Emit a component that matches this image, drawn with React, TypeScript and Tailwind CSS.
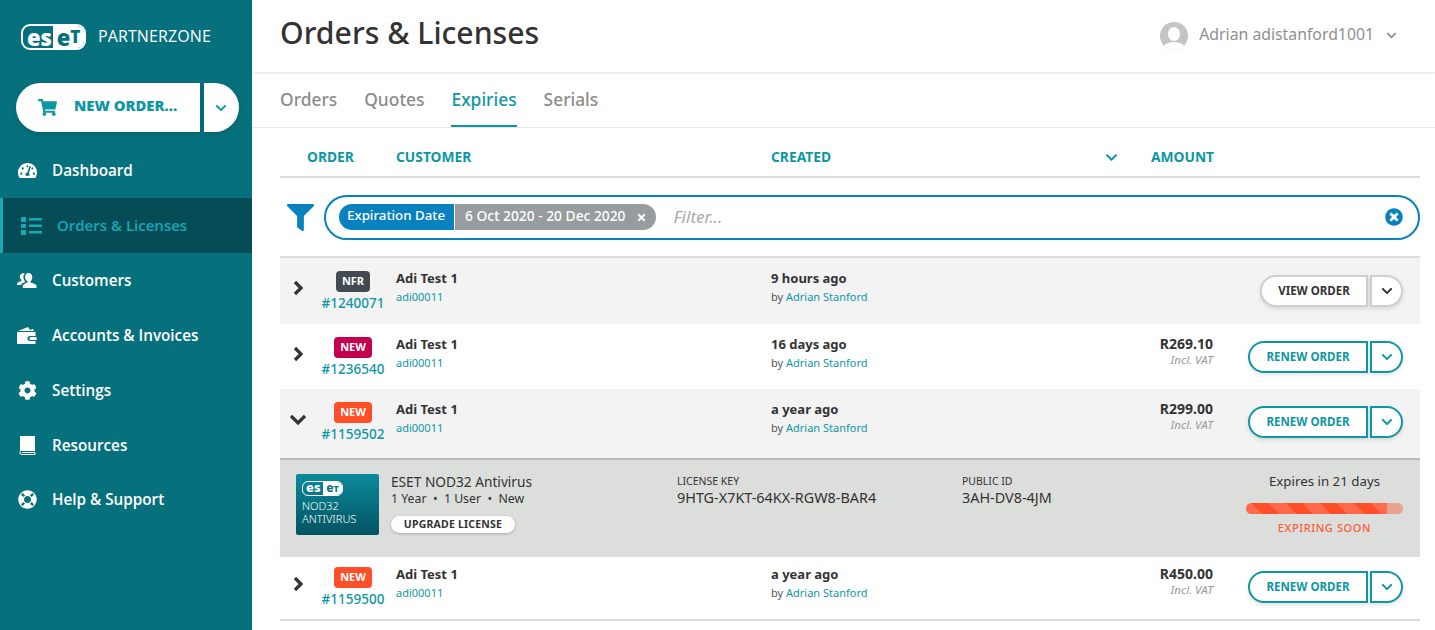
import React from "react";
import { FaChevronDown, FaCog, FaFilter, FaLifeRing, FaShoppingCart, FaTachometerAlt, FaTimes, FaTimesCircle } from "react-icons/fa";

function Logo({ small }: { small?: boolean }) {
  if (small) {
    return (
      <div className="flex h-[15px] w-[41px] items-center rounded-[6px] border border-white font-extrabold leading-none text-white">
        <span className="flex-1 pb-[2px] pl-[3px] text-[13px] leading-[13px]">es</span>
        <span className="flex h-full w-[19px] items-center justify-center rounded-r-[5px] bg-white pb-[1px] text-[12px] leading-[12px] text-[#0b7385]">
          e<span className="text-[9px] leading-[9px]">T</span>
        </span>
      </div>
    );
  }
  return (
    <div className="flex h-[26px] w-[65px] items-center rounded-[9px] border-2 border-white font-extrabold text-white">
      <span className="flex-1 pb-[1px] pl-[4px] text-[22px] leading-[20px]">es</span>
      <span className="flex h-full w-[31px] items-center justify-center rounded-r-[7px] bg-white pb-[1px] text-[22px] leading-[20px] text-[#07707d]">
        e<span className="text-[17px] leading-[17px]">T</span>
      </span>
    </div>
  );
}

function CustomersIcon() {
  return (
    <svg viewBox="0 0 20 18" className="h-[18px] w-[20px]" fill="white">
      <path d="M11.500 1c2.300 0 3.800 1.800 3.800 4.200 0 1.800-.8 3.400-1.900 4.200v1.200c2.600.6 5.200 1.500 6.100 3V16H5.800v-2.400c.9-1.500 2.700-2.400 4.800-3V9.400C9.400 8.600 8 7 8 5.200 8 2.800 9.200 1 11.500 1Z" />
      <path d="M6.400 1.200c.5 0 1 .1 1.400.3C6.800 2.600 6.400 4 6.400 5.300c0 1.700.8 3.400 2 4.600v.1c-2.300.6-3.900 1.700-4.600 3.100H0v-1.800c.7-1.100 2.400-1.900 4.400-2.400v-1C3.500 7.300 2.800 6 2.800 4.500c0-1.900 1.600-3.300 3.600-3.300Z" />
    </svg>
  );
}

function WalletIcon() {
  return (
    <svg viewBox="0 0 20 19" className="h-[19px] w-[20px]" fill="white">
      <path d="M1 5 11 1l2 3 3-1 1 2H1Z" />
      <path d="M0 6h18.500v4H13a2.500 2.500 0 0 0 0 5h5.500v3H1a1 1 0 0 1-1-1V6Z" />
      <rect x="12.500" y="11" width="7.500" height="3" rx="1.500" />
    </svg>
  );
}

function BookIcon() {
  return (
    <svg viewBox="0 0 18 19" className="h-[19px] w-[18px]">
      <path d="M2.500 0H17v15H3a1.500 1.500 0 0 0-1 .4V1.500A1.500 1.500 0 0 1 2.500 0Z" fill="white" />
      <path d="M2 15.500V17a1.500 1.500 0 0 0 1.500 1.500H17V16.500H4" fill="none" stroke="white" strokeWidth="1" />
    </svg>
  );
}

function ListIcon() {
  return (
    <svg viewBox="0 0 21 18" className="h-[18px] w-[21px]" fill="#18a7b5">
      <rect x="0" y="0" width="5" height="5" />
      <rect x="0" y="7" width="5" height="4" />
      <rect x="0" y="13" width="5" height="5" />
      <rect x="8" y="1" width="13" height="2.500" />
      <rect x="8" y="7.500" width="13" height="2.500" />
      <rect x="8" y="14" width="13" height="2.500" />
    </svg>
  );
}

function NavItem({ label, icon, last }: { label: string; icon: React.ReactNode; last?: boolean }) {
  return (
    <div className={`flex ${last ? "h-[53px]" : "h-[55px]"} items-center pl-[17px] text-[15.250px] font-semibold text-white`}>
      <span className="flex w-[20px] items-center justify-center text-[19px]">{icon}</span>
      <span className="ml-[15px]">{label}</span>
    </div>
  );
}

function Sidebar() {
  return (
    <aside className="flex h-[630px] w-[252px] shrink-0 flex-col bg-[#07707d] font-['Open_Sans',sans-serif]">
      <div className="flex h-[83px] items-start pl-[21px] pt-[24px]">
        <Logo />
        <span className="ml-[12px] text-[16px] leading-[25px] tracking-[0.1px] text-white">PARTNERZONE</span>
      </div>
      <div className="flex h-[49px] pl-[16px]">
        <div className="flex h-[49px] w-[184px] items-center rounded-l-full bg-white pl-[22px] shadow-[0_2px_4px_rgba(0,0,0,0.15)]">
          <FaShoppingCart className="text-[19px] text-[#0e97a3]" />
          <span className="mb-[5px] ml-[17px] text-[14.800px] font-extrabold text-[#0e97a3]">NEW ORDER...</span>
        </div>
        <div className="ml-[4px] flex h-[49px] w-[35px] items-center justify-center rounded-r-full bg-white pr-[1px] shadow-[0_2px_4px_rgba(0,0,0,0.15)]">
          <FaChevronDown className="text-[12px] text-[#0e97a3]" />
        </div>
      </div>
      <div className="mt-[11px]">
        <NavItem label="Dashboard" icon={<FaTachometerAlt />} />
      </div>
      <div className="flex h-[55px] items-center border-l-[3px] border-[#18a7b5] bg-[#054c57] pl-[18px] text-[15px] font-semibold text-[#18a7b5]">
        <ListIcon />
        <span className="ml-[15px]">Orders &amp; Licenses</span>
      </div>
      <NavItem label="Customers" icon={<CustomersIcon />} />
      <NavItem label="Accounts &amp; Invoices" icon={<WalletIcon />} />
      <NavItem label="Settings" icon={<FaCog />} />
      <NavItem label="Resources" icon={<BookIcon />} />
      <NavItem label="Help &amp; Support" icon={<FaLifeRing />} last />
    </aside>
  );
}

function Avatar() {
  return (
    <svg viewBox="0 0 28 28" className="h-[28px] w-[28px]">
      <defs>
        <clipPath id="avatar-clip">
          <circle cx="14" cy="14" r="14" />
        </clipPath>
      </defs>
      <circle cx="14" cy="14" r="14" fill="#c4c4c4" />
      <g clipPath="url(#avatar-clip)" fill="white">
        <ellipse cx="14" cy="12" rx="6" ry="7" />
        <path d="M2 28c1-6 7-8 12-8s11 2 12 8Z" />
      </g>
    </svg>
  );
}

function Header() {
  return (
    <header className="relative z-10 flex h-[72px] items-center justify-between bg-white pl-[28px] pr-[38px] shadow-[0_1px_3px_rgba(0,0,0,0.13)]">
      <h1 className="pb-[6px] text-[30.200px] font-medium leading-none text-[#333]">Orders &amp; Licenses</h1>
      <div className="flex items-center pb-[1px] text-[#8f8f8f]">
        <Avatar />
        <span className="ml-[11px] pb-[1px] text-[15.800px]">Adrian adistanford1001</span>
        <FaChevronDown className="ml-[12px] text-[11px]" />
      </div>
    </header>
  );
}

function Tabs() {
  return (
    <nav className="flex h-[56px] gap-[27px] border-b border-[#e8e8e8] pl-[28px] text-[17.400px] font-medium text-[#8c8c8c]">
      <span className="pt-[14px]">Orders</span>
      <span className="pt-[14px]">Quotes</span>
      <span className="h-[55px] border-b-2 border-[#0e97a3] pt-[14px] text-[#0e97a3]">Expiries</span>
      <span className="pt-[14px]">Serials</span>
    </nav>
  );
}

function TableHead() {
  return (
    <div className="grid h-[50px] grid-cols-[116px_375px_380px_1fr] items-center border-b-2 border-[#dcdcdc] pt-[11px] text-[13.800px] font-bold text-[#0e97a3]">
      <span className="pl-[27px]">ORDER</span>
      <span>CUSTOMER</span>
      <span className="flex items-center justify-between pr-[33px]">
        CREATED
        <FaChevronDown className="text-[13px]" />
      </span>
      <span>AMOUNT</span>
    </div>
  );
}

function FilterBar() {
  return (
    <div className="flex h-[80px] items-center border-b-2 border-[#dcdcdc]">
      <FaFilter className="ml-[7px] text-[27px] text-[#0782be]" />
      <div className="ml-[10px] flex h-[45px] flex-1 items-center rounded-full border-2 border-[#0782be] pl-[13px] pr-[15px]">
        <span className="flex h-[26px] items-center rounded-l-full bg-[#0782be] pb-[2px] pl-[8px] pr-[9px] text-[13.300px] font-medium text-white">Expiration Date</span>
        <span className="ml-px flex h-[26px] items-center rounded-r-full bg-[#979c9f] pb-[2px] pl-[10px] pr-[9px] text-[13.800px] font-medium text-white">
          6 Oct 2020 - 20 Dec 2020
          <FaTimes className="ml-[10px] mt-[2px] text-[11px]" />
        </span>
        <span className="ml-[18px] flex-1 text-[17px] italic text-[#a9a9a9]">Filter...</span>
        <FaTimesCircle className="text-[18px] text-[#0782be]" />
      </div>
    </div>
  );
}

type RowData = {
  badge: string;
  badgeClass: string;
  id: string;
  created: string;
  amount?: string;
  action: string;
  open?: boolean;
  grey?: boolean;
  rowClass: string;
};

function ActionButton({ label }: { label: string }) {
  const view = label === "VIEW ORDER";
  const tone = view ? "border-[#cfcfcf] text-[#333]" : "border-[#0e97a3] text-[#0e97a3]";
  return (
    <div className="mt-[6px] flex justify-end pr-[17px]">
      <div className={`flex h-[32px] ${view ? "w-[108px]" : "w-[120px]"} items-center justify-center rounded-l-full border-2 bg-white pb-[1px] text-[11.500px] font-bold shadow-[0_2px_4px_rgba(0,0,0,0.12)] ${tone}`}>
        {label}
      </div>
      <div className={`ml-[2px] flex h-[32px] w-[33px] items-center justify-center rounded-r-full border-2 bg-white shadow-[0_2px_4px_rgba(0,0,0,0.12)] ${tone}`}>
        <FaChevronDown className="text-[12px]" />
      </div>
    </div>
  );
}

function Chevron({ open }: { open?: boolean }) {
  return (
    <svg viewBox="0 0 16 16" className="mt-[9px] h-[16px] w-[16px]" fill="none" stroke="#333" strokeWidth="3.200">
      <path d={open ? "M1 5l7 7 7-7" : "M5 2l6 6-6 6"} />
    </svg>
  );
}

function Row({ d }: { d: RowData }) {
  return (
    <div className={`grid grid-cols-[116px_375px_342px_100px_1fr] items-start ${d.rowClass} ${d.grey ? "bg-[#f3f3f3]" : "bg-white"}`}>
      <div className="flex items-start pt-[2px]">
        <span className="ml-[10px] w-[16px]">
          <Chevron open={d.open} />
        </span>
        <div className="ml-[15px] flex w-[64px] flex-col items-center">
          <span className={`flex h-[21px] items-center rounded-[4px] px-[6px] text-[11px] font-bold text-white ${d.badgeClass}`}>{d.badge}</span>
          <span className="mt-[3px] text-[13.500px] font-medium leading-[17px] text-[#0e97a3]">{d.id}</span>
        </div>
      </div>
      <div>
        <div className="text-[13px] font-bold leading-[19px] text-[#333]">Adi Test 1</div>
        <div className="text-[11px] leading-[17px] text-[#0e97a3]">adi00011</div>
      </div>
      <div>
        <div className="text-[13px] font-bold leading-[19px] text-[#333]">{d.created}</div>
        <div className="text-[11px] leading-[17px] text-[#555]">
          by <span className="text-[#0e97a3]">Adrian Stanford</span>
        </div>
      </div>
      <div className="-mt-[1px] text-right">
        {d.amount && (
          <>
            <div className="text-[14px] font-bold leading-[19px] text-[#333]">{d.amount}</div>
            <div className="text-[11.500px] italic leading-[13px] text-[#9a9a9a]">Incl. VAT</div>
          </>
        )}
      </div>
      <ActionButton label={d.action} />
    </div>
  );
}

function Detail() {
  return (
    <div className="flex h-[99px] border-y-2 border-t-[#b9b9b9] border-b-[#dcdedb] bg-[#dcdedb] pl-[16px] pt-[14px] text-[#333]">
      <div className="flex h-[61px] w-[83px] shrink-0 flex-col rounded-[2px] bg-gradient-to-b from-[#0c8b9b] to-[#035362] pl-[6px] pt-[7px]">
        <Logo small />
        <div className="mt-[2px] text-[11px] font-light leading-[15px] text-white">NOD32</div>
        <div className="-mt-[1px] text-[11px] font-light leading-[13px] text-white">ANTIVIRUS</div>
      </div>
      <div className="-mt-[1px] ml-[12px] w-[286px]">
        <div className="text-[13.700px] leading-[18px]">ESET NOD32 Antivirus</div>
        <div className="text-[12.300px] leading-[16px]">1 Year &nbsp;•&nbsp; 1 User &nbsp;•&nbsp; New</div>
        <div className="mt-[9px] flex h-[17px] w-[124px] items-center justify-center rounded-full bg-white text-[10.500px] font-bold tracking-[0.2px] shadow-[0_1px_3px_rgba(0,0,0,0.25)]">UPGRADE LICENSE</div>
      </div>
      <div className="-mt-[1px] w-[285px]">
        <div className="text-[10.500px] leading-[16px]">LICENSE KEY</div>
        <div className="text-[14.400px] leading-[18px]">9HTG-X7KT-64KX-RGW8-BAR4</div>
      </div>
      <div className="-mt-[1px] w-[284px]">
        <div className="text-[10.500px] leading-[16px]">PUBLIC ID</div>
        <div className="text-[14.400px] leading-[18px]">3AH-DV8-4JM</div>
      </div>
      <div className="-mt-[2px] flex w-[157px] flex-col items-center">
        <div className="text-[13.300px] leading-[18px]">Expires in 21 days</div>
        <div className="mt-[13px] flex h-[11px] w-full overflow-hidden rounded-full bg-[#e8a390]">
          <div className="h-full w-[90%] bg-[repeating-linear-gradient(45deg,#ff6a4c_0px,#ff6a4c_12px,#ff4f28_12px,#ff4f28_24px)]" />
        </div>
        <div className="mt-[6px] text-[11px] font-medium tracking-[0.6px] text-[#ff5a36]">EXPIRING SOON</div>
      </div>
    </div>
  );
}

const rows: RowData[] = [
  { badge: "NFR", badgeClass: "bg-[#434a52]", id: "#1240071", created: "9 hours ago", action: "VIEW ORDER", grey: true, rowClass: "h-[66px] pt-[11px]" },
  { badge: "NEW", badgeClass: "bg-[#c4004f]", id: "#1236540", created: "16 days ago", amount: "R269.10", action: "RENEW ORDER", rowClass: "h-[65px] pt-[11px]" },
  { badge: "NEW", badgeClass: "bg-[#ff4f28]", id: "#1159502", created: "a year ago", amount: "R299.00", action: "RENEW ORDER", open: true, grey: true, rowClass: "h-[69px] pt-[11px]" },
  { badge: "NEW", badgeClass: "bg-[#ff4f28]", id: "#1159500", created: "a year ago", amount: "R450.00", action: "RENEW ORDER", rowClass: "h-[62px] pt-[8px]" },
];

export default function App() {
  return (
    <div className="flex h-[630px] w-[1435px] overflow-hidden bg-white font-['Noto_Sans',sans-serif]">
      <Sidebar />
      <main className="min-w-0 flex-1">
        <Header />
        <Tabs />
        <div className="ml-[28px] mr-[15px]">
          <TableHead />
          <FilterBar />
          <Row d={rows[0]} />
          <Row d={rows[1]} />
          <Row d={rows[2]} />
          <Detail />
          <Row d={rows[3]} />
          <div className="h-[2px] bg-[#dcdcdc]" />
        </div>
      </main>
    </div>
  );
}
